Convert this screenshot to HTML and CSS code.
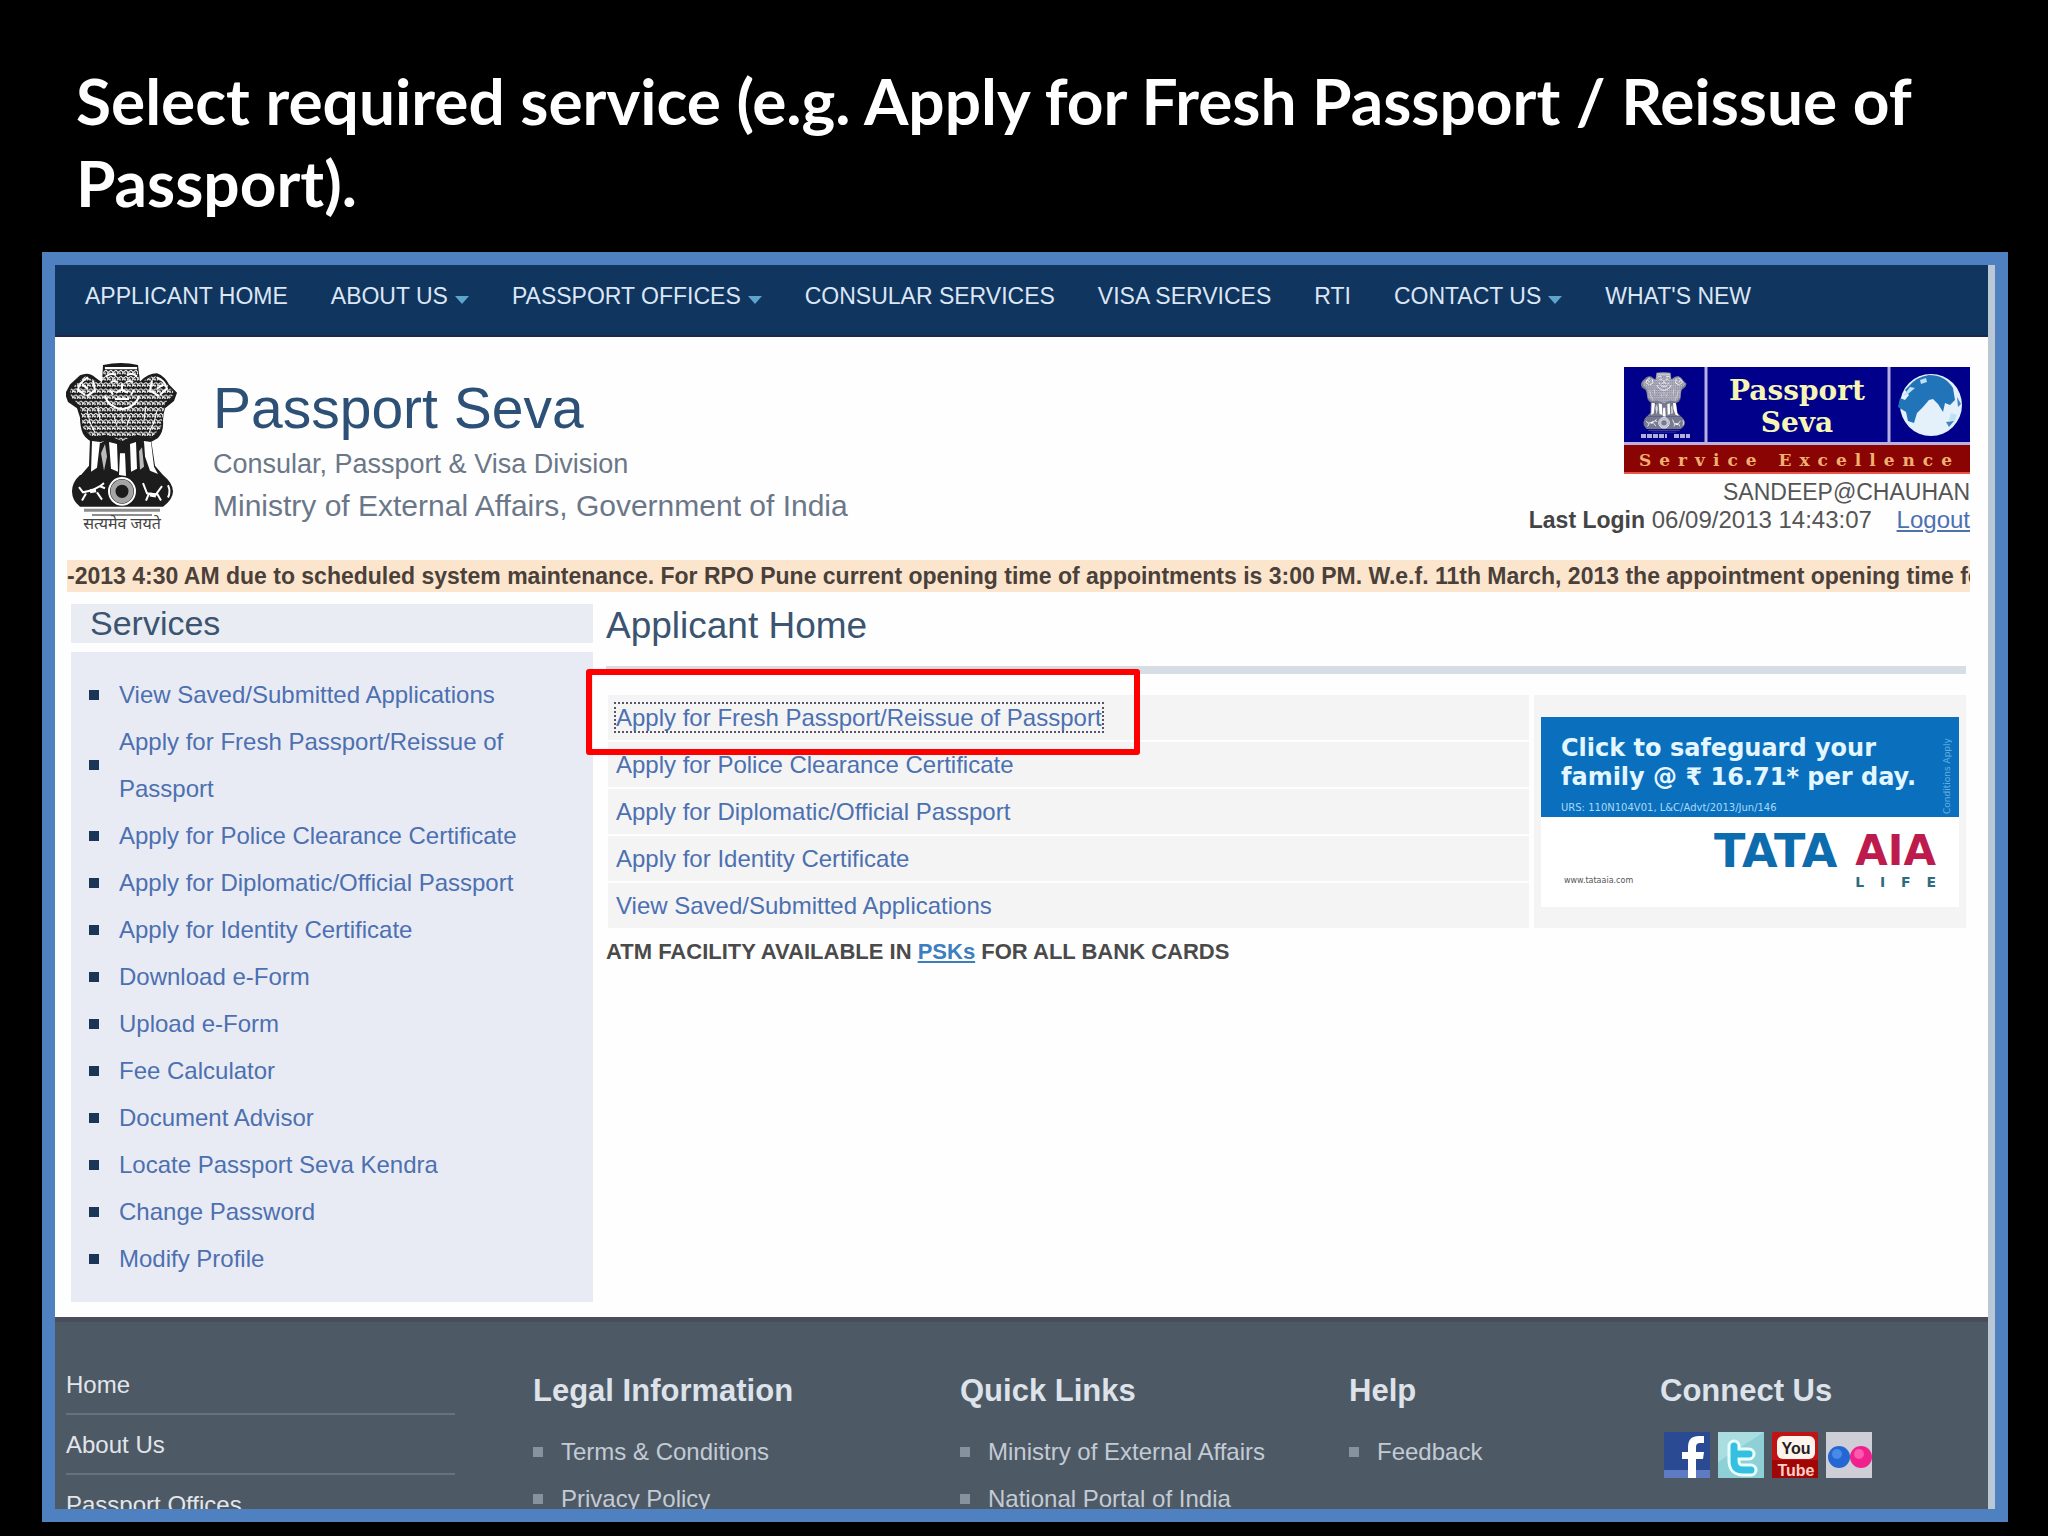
FILE: index.html
```html
<!DOCTYPE html>
<html lang="en">
<head>
  <meta charset="UTF-8">
  <meta name="viewport" content="width=device-width, initial-scale=1.0">
  <title>Passport Seva - Applicant Home</title>
  <link rel="stylesheet" href="styles.css">
</head>
<body>
  <!-- shared emblem drawing -->
  <svg class="defs" width="0" height="0" aria-hidden="true">
    <defs>
      <pattern id="curls" width="5" height="6" patternUnits="userSpaceOnUse">
        <path d="M0 1l2 2 3-2M1 5q1-2 2-1t2 0M4 3v1" fill="none" stroke="#fff" stroke-width="1"/>
      </pattern>
      <symbol id="emblem" viewBox="0 0 112 150" preserveAspectRatio="none">
        <g fill="currentColor">
          <path d="M37 2q18-4 35 0l2 16q8-8 17-8 8 3 12 11l8 8-3 8-9 7q-2 6-2 12 1 11-5 17-6 4-11 5l-7-2-8 2-9 4-10-4-8-2-9 2q-9-2-13-9-3-7-3-16l-3-9-9-6-3-8 5-9 10-9q9-4 15 2l7 5z"/>
          <path d="M24 74l-1 26-8 9h82l-8-9-4-26-6 4-8-5-14 3-14-3-8 5z"/>
          <path d="M14 109h83q10 8 10 16t-10 15H14q-8-6-8-15t8-16z"/>
        </g>
        <path d="M4 26l15-13 15 6 5-15h32l3 15 14-7 13 9 8 9-10 9-4 24-10 10-14-3-15 6-16-6-14 2-9-9-3-21-9-9z" fill="url(#curls)"/>
        <g fill="none" stroke="#fff" stroke-width="2">
          <path d="M39 5h32M40 13q5-4 10-1M61 12q5-3 10 1M39 32q3 11 17 13 14-2 17-13"/>
          <path d="M45 19q3-3 7 0M60 19q4-3 7 0M50 29l6-3 6 3M56 20v6M44 26l3 5M68 26l-3 5M49 35h14"/>
          <path d="M22 14q-9 5-10 12l7 5M27 17l2 10-8 5M16 21l6 4M91 14q8 3 10 11l-7 6M86 17l-2 10 9 5M97 21l-6 4"/>
          <path d="M21 46l3 12 5 10M91 46l-3 12-5 10M32 42l2 14M80 42l-2 14M56 50v8M48 52l3 9M64 52l-3 9" stroke-width="1"/>
        </g>
        <g fill="#fff">
          <path d="M26 76l8 1-3 25-6 4zM43 77l8 2 1 27-7-3zM54 88h5l1 22-7-1zM64 79l6-2 1 26-6 3zM78 76l7 1 3 24 4 7-8-3-5-14z"/>
          <path d="M35 88l4-9 2 12-3 14zM73 86l3-4 2 19-4 3z" opacity=".7"/>
        </g>
        <g fill="none" stroke="#fff" stroke-width="2">
          <circle cx="56" cy="125" r="13"/>
          <circle cx="56" cy="125" r="9" stroke-width="5" opacity=".6"/>
          <path d="M13 121l4 5 9-2 8-4 4-3M20 127l-4 7M31 126l5 7M34 120l5 2M77 117l4 10 9 1 6-8M83 127l-3 7M91 127l4 7M102 119q3 6 0 12"/>
          <path d="M24 125l6-1M84 128l6 1" stroke-width="4"/>
        </g>
        <circle cx="56" cy="125" r="3" fill="currentColor"/>
        <path d="M18 142h76v3H18zM26 147h60v2H26z" fill="currentColor" opacity=".5"/>
      </symbol>
    </defs>
  </svg>

  <h1 class="slide-title">Select required service (e.g. Apply for Fresh Passport / Reissue of Passport).</h1>

  <div class="frame">
    <div class="screen">
      <nav class="topnav">
        <a href="#">APPLICANT HOME</a>
        <a href="#" class="has-menu">ABOUT US</a>
        <a href="#" class="has-menu">PASSPORT OFFICES</a>
        <a href="#">CONSULAR SERVICES</a>
        <a href="#">VISA SERVICES</a>
        <a href="#">RTI</a>
        <a href="#" class="has-menu">CONTACT US</a>
        <a href="#">WHAT'S NEW</a>
      </nav>

      <header class="header">
        <div class="emblem">
          <svg width="112" height="154" aria-hidden="true"><use href="#emblem"/></svg>
          <span class="motto" lang="hi">सत्यमेव जयते</span>
        </div>
        <div class="brand">
          <h2>Passport Seva</h2>
          <p class="division">Consular, Passport &amp; Visa Division</p>
          <p class="ministry">Ministry of External Affairs, Government of India</p>
        </div>
        <div class="account">
          <svg class="banner" width="346" height="107" viewBox="0 0 346 107" role="img" aria-label="Passport Seva Service Excellence">
            <rect width="346" height="107" fill="#00008b"/>
            <rect y="77" width="346" height="30" fill="#8b0404"/>
            <path d="M0 76.500h346M82 0v76M265 0v76" stroke="#b9b0e0" stroke-width="3"/>
            <path d="M0 106h346" stroke="#e8554a" stroke-width="2"/>
            <svg x="17" y="5" width="46" height="61" color="#77798f"><use href="#emblem"/></svg>
            <path d="M17 69h26M50 69h16" stroke="#aeb0dc" stroke-width="4" stroke-dasharray="5 1"/>
            <text class="banner-name" x="173" y="33">Passport</text>
            <text class="banner-name" x="173" y="65">Seva</text>
            <text class="banner-tag" x="15" y="99">Service Excellence</text>
            <circle cx="307" cy="38" r="31" fill="#e4f1fb"/>
            <path d="M285 19q7-9 20-11 16 0 24 13l2 12-5 5-5-2-2 9-5-8-5-5-4 1-6 7-6 6-3 10-6-2-2-9-8-5 2-9 5 2 4-5-4-5z" fill="#2274b8"/>
            <path d="M279 29l7-9 5 1-7 6zM327 46l6 2-3 7-5-2zM296 13l6-2 1 4-6 2z" fill="#bfe0f5"/>
            <path d="M322 55l8-1-5 6zM333 30l4 7-3 3z" fill="#3f86c0"/>
          </svg>
          <p class="user">SANDEEP@CHAUHAN</p>
          <p class="login"><strong>Last Login</strong> 06/09/2013 14:43:07 <a href="#">Logout</a></p>
        </div>
      </header>

      <div class="ticker">-2013 4:30 AM due to scheduled system maintenance. For RPO Pune current opening time of appointments is 3:00 PM. W.e.f. 11th March, 2013 the appointment opening time for</div>

      <div class="main">
        <aside class="services">
          <h3>Services</h3>
          <ul>
            <li><a href="#">View Saved/Submitted Applications</a></li>
            <li><a href="#">Apply for Fresh Passport/Reissue of Passport</a></li>
            <li><a href="#">Apply for Police Clearance Certificate</a></li>
            <li><a href="#">Apply for Diplomatic/Official Passport</a></li>
            <li><a href="#">Apply for Identity Certificate</a></li>
            <li><a href="#">Download e-Form</a></li>
            <li><a href="#">Upload e-Form</a></li>
            <li><a href="#">Fee Calculator</a></li>
            <li><a href="#">Document Advisor</a></li>
            <li><a href="#">Locate Passport Seva Kendra</a></li>
            <li><a href="#">Change Password</a></li>
            <li><a href="#">Modify Profile</a></li>
          </ul>
        </aside>

        <section class="content">
          <h3>Applicant Home</h3>
          <div class="panel">
            <ul class="actions">
              <li class="current"><a href="#">Apply for Fresh Passport/Reissue of Passport</a><span class="highlight"></span></li>
              <li><a href="#">Apply for Police Clearance Certificate</a></li>
              <li><a href="#">Apply for Diplomatic/Official Passport</a></li>
              <li><a href="#">Apply for Identity Certificate</a></li>
              <li><a href="#">View Saved/Submitted Applications</a></li>
            </ul>
            <div class="ad-cell">
              <a href="#" class="ad">
                <span class="ad-top">
                  <span class="ad-copy">
                    <span class="ad-text">Click to safeguard your<br>family @ ₹ 16.71* per day.</span>
                    <span class="ad-code">URS: 110N104V01, L&amp;C/Advt/2013/Jun/146</span>
                  </span>
                  <span class="ad-side">Conditions Apply</span>
                </span>
                <span class="ad-bottom">
                  <span class="ad-url">www.tataaia.com</span>
                  <span class="tata">TATA</span>
                  <span class="aia">
                    <span>AIA</span>
                    <span class="life"><i>L</i><i>I</i><i>F</i><i>E</i></span>
                  </span>
                </span>
              </a>
            </div>
          </div>
          <p class="atm">ATM FACILITY AVAILABLE IN <a href="#">PSKs</a> FOR ALL BANK CARDS</p>
        </section>
      </div>

      <footer class="footer">
        <ul class="foot-nav">
          <li><a href="#">Home</a></li>
          <li><a href="#">About Us</a></li>
          <li><a href="#">Passport Offices</a></li>
        </ul>
        <div class="foot-col">
          <h4>Legal Information</h4>
          <ul>
            <li><a href="#">Terms &amp; Conditions</a></li>
            <li><a href="#">Privacy Policy</a></li>
          </ul>
        </div>
        <div class="foot-col">
          <h4>Quick Links</h4>
          <ul>
            <li><a href="#">Ministry of External Affairs</a></li>
            <li><a href="#">National Portal of India</a></li>
          </ul>
        </div>
        <div class="foot-col">
          <h4>Help</h4>
          <ul>
            <li><a href="#">Feedback</a></li>
          </ul>
        </div>
        <div class="foot-col">
          <h4>Connect Us</h4>
          <div class="social">
            <a href="#" aria-label="Facebook">
              <svg width="46" height="46" viewBox="0 0 46 46">
                <rect width="46" height="46" fill="#2b4a94"/>
                <rect y="38" width="46" height="8" fill="#5f7bc4"/>
                <path d="M24 46V27h-6v-7h6v-5q0-11 11-11h5v7h-4q-4 0-4 4v5h8l-1 7h-7v19z" fill="#fff"/>
              </svg>
            </a>
            <a href="#" aria-label="Twitter">
              <svg width="46" height="46" viewBox="0 0 46 46">
                <rect width="46" height="46" fill="#8fd0d6"/>
                <path d="M0 0h46L0 30z" fill="#a9dde0"/>
                <g fill="none" stroke-linecap="round" stroke-linejoin="round">
                  <path d="M16 14v15q0 9 9 9h8M16 22h15" stroke="#e9ffff" stroke-width="13"/>
                  <path d="M16 14v15q0 9 9 9h8M16 22h15" stroke="#35bfe0" stroke-width="7"/>
                </g>
              </svg>
            </a>
            <a href="#" aria-label="YouTube">
              <svg width="46" height="46" viewBox="0 0 46 46">
                <rect width="46" height="46" rx="2" fill="#c01414"/>
                <rect y="28" width="46" height="18" fill="#a00606"/>
                <rect x="5" y="4" width="38" height="23" rx="6" fill="#fff4ee"/>
                <text class="yt yt-top" x="24" y="22">You</text>
                <text class="yt yt-bottom" x="24" y="44">Tube</text>
              </svg>
            </a>
            <a href="#" aria-label="Flickr">
              <svg width="46" height="46" viewBox="0 0 46 46">
                <rect width="46" height="46" fill="#cdced6"/>
                <circle cx="13" cy="25" r="11" fill="#2466d2"/>
                <circle cx="35" cy="25" r="11" fill="#f0218c"/>
                <circle cx="11" cy="22" r="5" fill="#4a8ae6"/>
                <circle cx="33" cy="22" r="5" fill="#fb5aae"/>
              </svg>
            </a>
          </div>
        </div>
      </footer>
    </div>
  </div>
</body>
</html>
```

FILE: styles.css
```css
* {
  box-sizing: border-box;
  margin: 0;
  padding: 0;
}
body {
  height: 100vh;
  display: flex;
  flex-direction: column;
  background-color: #000;
  font-family: "Liberation Sans", Arial, sans-serif;
  font-size: 24px;
}
ul {
  list-style: none;
}
a {
  color: #4c70b0;
  text-decoration: none;
}
.defs {
  position: absolute;
}
.slide-title {
  padding: 60px 76px 28px;
  font-family: Lato, Carlito, sans-serif;
  font-size: 64px;
  line-height: 82px;
  font-weight: bold;
  color: #fff;
}
.frame {
  flex: 1;
  min-height: 0;
  margin: 0 40px 14px 42px;
  border: 13px solid #4f81c0;
  overflow: hidden;
}
.screen {
  background-color: #fefefe;
  border-right: 7px solid #bac8d6;
}

/* top menu */
.topnav {
  display: flex;
  gap: 43px;
  padding: 16px 30px 24px;
  background-color: #10355f;
  border-bottom: 2px solid #22264c;
}
.topnav a {
  color: #dce6f5;
  font-size: 23px;
  line-height: 30px;
  white-space: nowrap;
}
.has-menu::after {
  content: "";
  display: inline-block;
  margin-left: 7px;
  border: 7px solid transparent;
  border-top: 8px solid #5fa3cf;
  border-bottom: 0;
}

/* header */
.header {
  display: flex;
  padding: 26px 18px 26px 11px;
}
.emblem {
  display: flex;
  flex-direction: column;
  align-items: center;
  width: 112px;
  margin-right: 35px;
  color: #1c1c1c;
}
.motto {
  font-family: "Noto Sans Devanagari", "Noto Sans", sans-serif;
  font-size: 16px;
  line-height: 17px;
  color: #444;
  white-space: nowrap;
}
.brand {
  flex: 1;
  padding-top: 15px;
}
.brand h2 {
  font-size: 57px;
  line-height: 60px;
  font-weight: normal;
  color: #2c5076;
}
.brand p {
  line-height: 42px;
  color: #6b7788;
}
.brand .division {
  margin-top: 5px;
  font-size: 27px;
}
.brand .ministry {
  font-size: 30px;
}
.account {
  display: flex;
  flex-direction: column;
  align-items: flex-end;
  padding-top: 4px;
  line-height: 28px;
  color: #555;
}
.banner {
  margin-bottom: 4px;
}
.banner-name {
  font: bold 28px "DejaVu Serif", serif;
  fill: #f6f6b4;
  text-anchor: middle;
}
.banner-tag {
  font: bold 17px "DejaVu Serif", serif;
  letter-spacing: 8px;
  fill: #f0b070;
}
.user,
.login strong {
  font-size: 23px;
}
.login strong {
  color: #444;
}
.login a {
  margin-left: 18px;
  text-decoration: underline;
}
.ticker {
  margin: 0 18px 0 12px;
  background-color: #fce5cd;
  font-size: 23px;
  line-height: 32px;
  font-weight: bold;
  color: #4a403a;
  white-space: nowrap;
  overflow: hidden;
}

/* main area */
.main {
  display: grid;
  grid-template-columns: 522fr 1360fr;
  gap: 13px;
  padding: 12px 22px 15px 16px;
}
.services h3 {
  padding-left: 19px;
  background-color: #e9ecf2;
  font-size: 34px;
  line-height: 39px;
  font-weight: normal;
  color: #3b5470;
}
.services ul {
  margin-top: 9px;
  padding: 19px 60px 20px 18px;
  background-color: #e9ebf4;
}
.services li,
.foot-col li {
  display: flex;
  align-items: center;
  line-height: 47px;
}
.services li::before,
.foot-col li::before {
  content: "";
  flex: none;
  width: 10px;
  height: 10px;
  margin-right: 20px;
  background-color: #1b3556;
}
.content h3 {
  padding-bottom: 18px;
  border-bottom: 8px solid #d6dde5;
  font-size: 37px;
  line-height: 44px;
  font-weight: normal;
  color: #3b5470;
}
.panel {
  display: flex;
  gap: 5px;
  margin: 21px 0 0 2px;
}
.actions {
  flex: 1;
  display: flex;
  flex-direction: column;
  gap: 2px;
}
.actions li {
  padding-left: 8px;
  background-color: #f4f4f5;
  line-height: 45px;
}
.current {
  position: relative;
}
.current a {
  outline: 2px dotted #556;
}
.highlight {
  position: absolute;
  top: -26px;
  left: -22px;
  width: 554px;
  height: 86px;
  border: 6px solid #fe0000;
  border-radius: 3px;
}
.ad-cell {
  padding: 22px 7px 21px;
  background-color: #f4f4f5;
}
.ad {
  display: block;
  width: 418px;
  background-color: #fff;
  font-family: "DejaVu Sans", sans-serif;
}
.ad-top {
  display: flex;
  justify-content: space-between;
  padding: 17px 6px 3px 20px;
  background-color: #0a70be;
  color: #e4f6ff;
}
.ad-copy {
  display: flex;
  flex-direction: column;
  gap: 10px;
}
.ad-text {
  font-size: 24px;
  line-height: 29px;
  font-weight: bold;
  white-space: nowrap;
}
.ad-code {
  font-size: 10px;
  line-height: 12px;
  color: #a9d8f5;
}
.ad-side {
  writing-mode: vertical-rl;
  transform: rotate(180deg);
  font-size: 9px;
  line-height: 12px;
  white-space: nowrap;
  color: #64aee0;
}
.ad-bottom {
  display: flex;
  justify-content: flex-end;
  padding: 13px 23px 19px;
  font-size: 42px;
  line-height: 42px;
  font-weight: bold;
}
.ad-url {
  flex: 1;
  align-self: flex-end;
  font-size: 8px;
  line-height: 14px;
  font-weight: normal;
  color: #555;
}
.tata {
  margin-right: 18px;
  font-size: 46px;
  color: #0d6cae;
}
.aia {
  display: flex;
  flex-direction: column;
  gap: 4px;
  color: #bd1a4e;
}
.life {
  display: flex;
  justify-content: space-between;
  font-size: 14px;
  line-height: 12px;
  color: #2c6c82;
}
.life i {
  font-style: normal;
}
.atm {
  margin-top: 9px;
  font-size: 22px;
  line-height: 30px;
  font-weight: bold;
  color: #4a4a4a;
}
.atm a {
  color: #3d7fbe;
  text-decoration: underline;
}

/* footer */
.footer {
  display: grid;
  grid-template-columns: 467fr 427fr 389fr 311fr 328fr;
  padding: 33px 0 20px 11px;
  border-top: 5px solid #4a4e5c;
  background-color: #4e5966;
}
.foot-nav {
  margin-right: 78px;
}
.foot-nav li {
  padding: 15px 0 13px;
  border-bottom: 2px solid #667181;
  line-height: 30px;
}
.foot-nav a {
  color: #e2e6ea;
}
.foot-col h4 {
  margin: 18px 0 19px;
  font-size: 31px;
  line-height: 36px;
  color: #dde3e9;
}
.foot-col li::before {
  margin-right: 18px;
  background-color: #8791a0;
}
.foot-col a {
  color: #c3cbd4;
}
.social {
  display: flex;
  gap: 8px;
  padding: 4px;
}
.social svg {
  display: block;
}
.yt {
  font: bold 16px "Liberation Sans", sans-serif;
  text-anchor: middle;
}
.yt-top {
  fill: #222;
}
.yt-bottom {
  fill: #ffd0c8;
}
```
